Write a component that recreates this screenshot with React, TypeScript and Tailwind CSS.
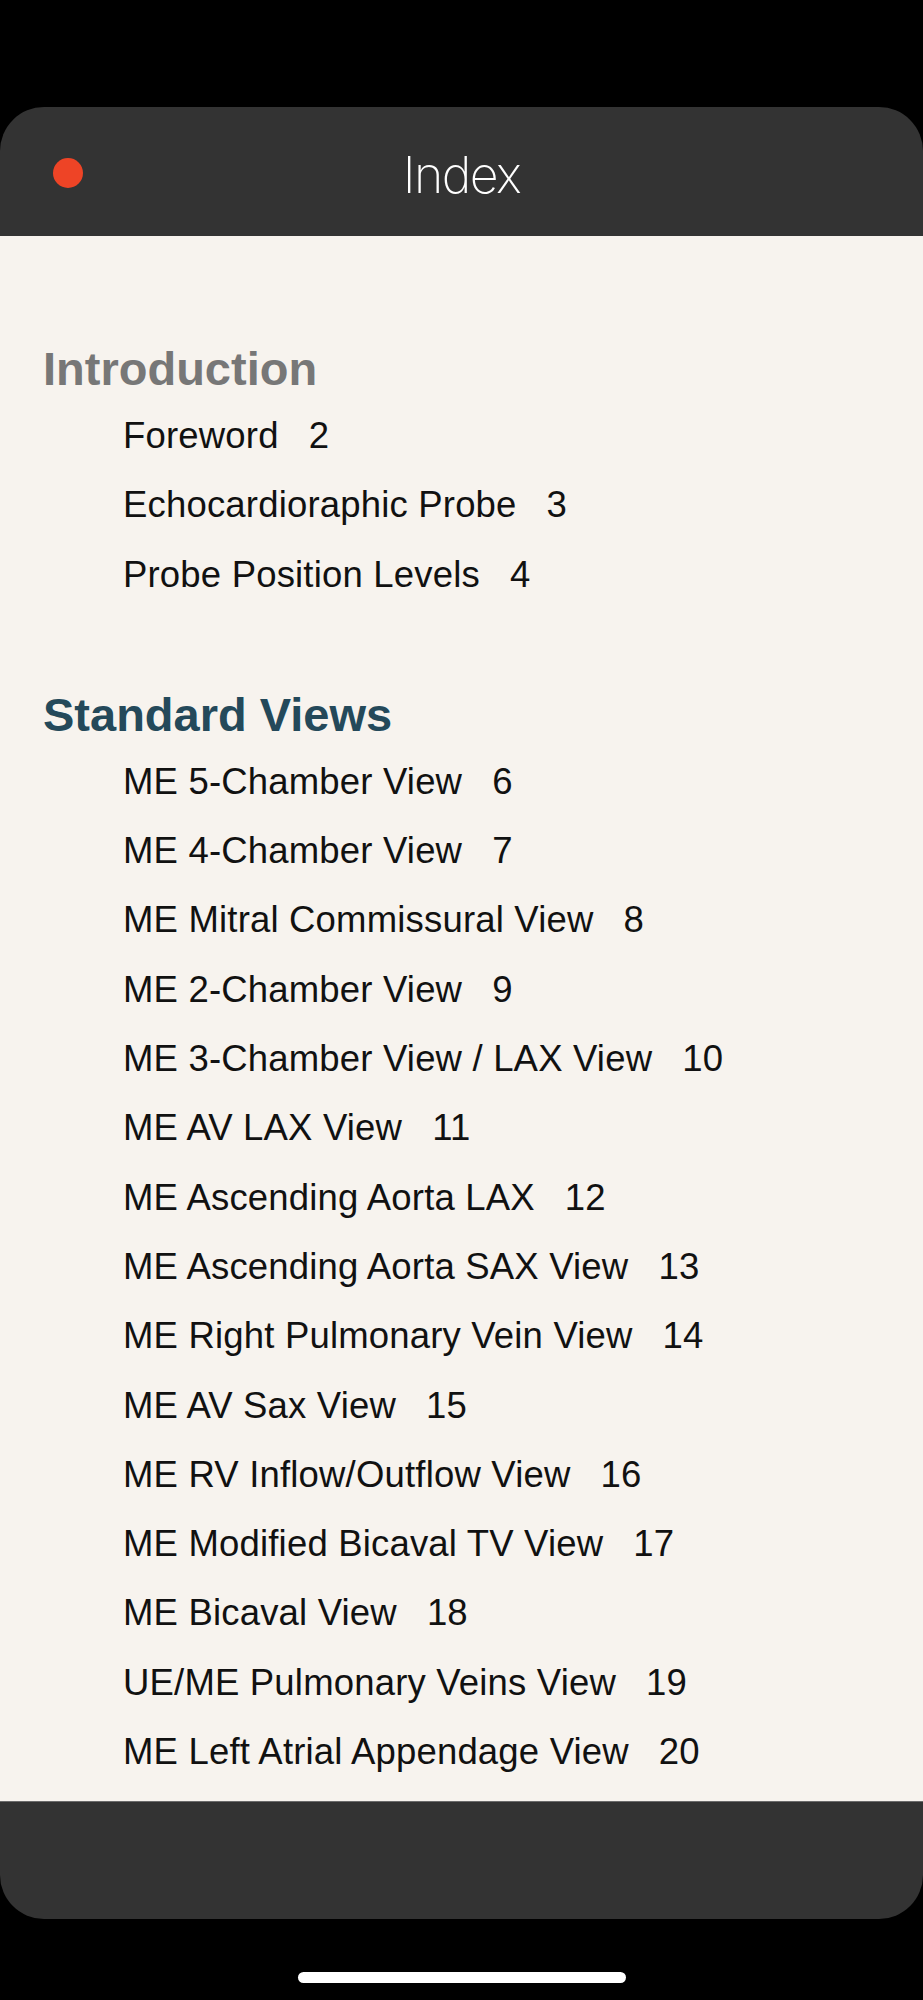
const INTRO = [
  { title: 'Foreword', page: 2 },
  { title: 'Echocardioraphic Probe', page: 3 },
  { title: 'Probe Position Levels', page: 4 },
]

const VIEWS = [
  { title: 'ME 5-Chamber View', page: 6 },
  { title: 'ME 4-Chamber View', page: 7 },
  { title: 'ME Mitral Commissural View', page: 8 },
  { title: 'ME 2-Chamber View', page: 9 },
  { title: 'ME 3-Chamber View / LAX View', page: 10 },
  { title: 'ME AV LAX View', page: 11 },
  { title: 'ME Ascending Aorta LAX', page: 12 },
  { title: 'ME Ascending Aorta SAX View', page: 13 },
  { title: 'ME Right Pulmonary Vein View', page: 14 },
  { title: 'ME AV Sax View', page: 15 },
  { title: 'ME RV Inflow/Outflow View', page: 16 },
  { title: 'ME Modified Bicaval TV View', page: 17 },
  { title: 'ME Bicaval View', page: 18 },
  { title: 'UE/ME Pulmonary Veins View', page: 19 },
  { title: 'ME Left Atrial Appendage View', page: 20 },
]

function Entry({ title, page }: { title: string, page: number }) {
  return (
    <li className="pl-[123px] text-[36.5px] tracking-[0.005em] leading-[69.3px] text-[#111111] whitespace-nowrap">
      {title}<span className="ml-[30px]">{page}</span>
    </li>
  )
}

export default function App() {
  return (
    <div className="w-[923px] h-[2000px] bg-black flex flex-col font-['Liberation_Sans',Arial,sans-serif]">
      <div className="h-[107px] shrink-0" />

      <div className="flex flex-col h-[1812px] rounded-[44px] overflow-hidden bg-[#333333]">
        {/* Title bar */}
        <header className="relative h-[129px] shrink-0 flex items-center justify-center">
          <span className="absolute left-[53px] top-[51px] w-[30px] h-[30px] rounded-full bg-[#ee4426]" />
          <h1 className="font-['Inter',sans-serif] font-extralight text-[50px] leading-none tracking-[-0.03em] text-white pt-[6px]">
            Index
          </h1>
        </header>

        {/* Contents */}
        <main className="flex-1 bg-[#f7f3ee] pt-[110px] border-b border-[#6b6b6b]">
          <h2 className="pl-[43px] text-[47px] leading-[46px] font-bold text-[#777777] mb-[9px]">
            Introduction
          </h2>
          <ul>
            {INTRO.map(e => <Entry key={e.title} {...e} />)}
          </ul>

          <h2 className="pl-[43px] mt-[83px] text-[47px] leading-[46px] font-bold text-[#24495a] mb-[9px]">
            Standard Views
          </h2>
          <ul>
            {VIEWS.map(e => <Entry key={e.title} {...e} />)}
          </ul>
        </main>

        {/* Bottom bar */}
        <footer className="h-[117px] shrink-0" />
      </div>

      <div className="flex-1 flex justify-center pt-[53px]">
        <div className="w-[328px] h-[11px] rounded-full bg-white" />
      </div>
    </div>
  )
}
